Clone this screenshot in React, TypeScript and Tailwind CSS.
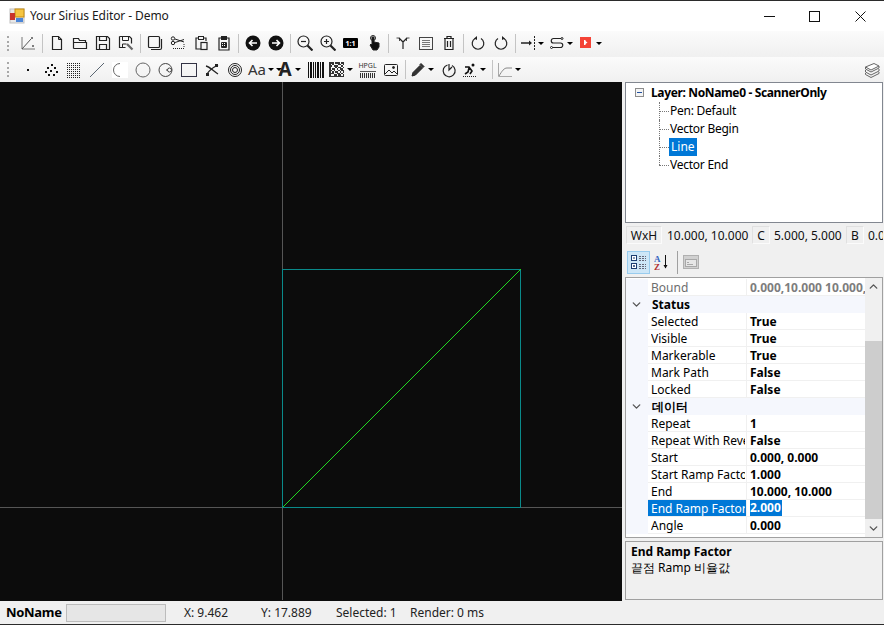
import type { ReactNode } from "react";
import { ChevronDown, ChevronUp } from "lucide-react";

const Ico = ({ children, size = 16 }: { children: ReactNode; size?: number }) => (
  <svg width={size} height={size} viewBox="0 0 16 16" fill="none" stroke="#222" strokeWidth="1" className="shrink-0">
    {children}
  </svg>
);

const Btn = ({ children }: { children: ReactNode }) => (
  <div className="flex h-full w-[23px] shrink-0 items-center justify-center">{children}</div>
);

const Caret = () => (
  <div className="h-0 w-0 shrink-0 border-x-[3px] border-t-[3px] border-x-transparent border-t-black" />
);

const CaretBtn = ({ children }: { children: ReactNode }) => (
  <div className="flex h-full w-[29px] shrink-0 items-center gap-[2px] pl-[2px]">
    {children}
    <Caret />
  </div>
);

const Sep = () => (
  <div className="flex h-full w-[6px] shrink-0 items-center justify-center">
    <div className="h-[19px] w-px bg-[#c4c4c4]" />
  </div>
);

const Grip = () => (
  <div className="flex h-full w-[16px] shrink-0 items-center justify-center pr-[1px]">
    <div className="h-[15px] w-[2px] border-l-2 border-dotted border-[#a8a8a8]" />
  </div>
);

const SCATTER = [[8, 2], [4, 5], [11, 5], [7, 8], [2, 9], [13, 9], [5, 12], [10, 12]];

// rough data matrix look, 1 = dark cell
const MATRIX = [
  "1110111011",
  "1010001101",
  "1101110010",
  "1000101101",
  "1011010110",
  "1101001011",
  "1010110101",
  "1110011010",
  "1001101101",
  "1111111111",
];

const Toolbar1 = () => (
  <div className="flex h-[26px] bg-gradient-to-b from-[#fbfbfb] to-[#f0f0f0] pb-[2px]">
    <Grip />
    <Btn>
      <Ico>
        <path d="M2 2v12h13" stroke="#777" />
        <path d="M2 14 11 4" stroke="#555" />
        <path d="M11 3h2M12 2v2M12 11h2M13 10v2" stroke="#555" />
      </Ico>
    </Btn>
    <Sep />
    <Btn>
      <Ico>
        <path d="M3.500 1.500h6l3 3v10h-9z" strokeWidth="1.200" />
        <path d="M9.500 1.500v3h3" />
      </Ico>
    </Btn>
    <Btn>
      <Ico>
        <path d="M1.500 13.500v-10h5l1 2h6v2M1.500 13.500h13v-6h-13" strokeWidth="1.200" />
      </Ico>
    </Btn>
    <Btn>
      <Ico>
        <path d="M1.500 1.500h11l2 2v11h-13z" strokeWidth="1.200" />
        <path d="M4.500 1.500v4h7v-4M4.500 14.500v-5h7v5" strokeWidth="1.200" />
      </Ico>
    </Btn>
    <Btn>
      <Ico>
        <path d="M1.500 1.500h10l2 2v5M1.500 1.500v11h6" strokeWidth="1.200" />
        <path d="M4.500 1.500v4h6v-4M4.500 12v-3h4" />
        <path d="m9 9 5.500 5.500" stroke="#666" strokeWidth="2.200" />
      </Ico>
    </Btn>
    <Sep />
    <Btn>
      <Ico>
        <rect x="1.500" y="1.500" width="11" height="11" rx="1" strokeWidth="1.200" />
        <path d="M14.500 4v9a1.500 1.500 0 0 1-1.500 1.500H4" strokeWidth="1.200" />
      </Ico>
    </Btn>
    <Btn>
      <Ico>
        <circle cx="3" cy="3.500" r="1.700" />
        <circle cx="3" cy="8" r="1.700" />
        <path d="m5 4 9 3M5 7.500l9-3" />
        <path d="M3 13.500h11M14 9v4" strokeDasharray="1 1" />
      </Ico>
    </Btn>
    <Btn>
      <Ico>
        <path d="M5 3H3v11h5M11 3h2v3" strokeWidth="1.200" />
        <rect x="5.500" y="1.500" width="5" height="3" />
        <rect x="8" y="7.500" width="6" height="7" strokeWidth="1.200" />
      </Ico>
    </Btn>
    <Btn>
      <Ico>
        <path d="M5 3H3v12h10V3h-2" strokeWidth="1.200" />
        <rect x="5.500" y="1.500" width="5" height="3" fill="#222" />
        <path d="M5.500 7.500h5v5h-5zM5.500 9.500h5M5.500 11.500h5M7.500 7.500v5M9.500 7.500v5" />
      </Ico>
    </Btn>
    <Sep />
    <Btn>
      <svg width="16" height="16" viewBox="0 0 16 16">
        <circle cx="8" cy="8" r="7.500" fill="#111" />
        <path d="M12 8H5M7.500 5 4.500 8l3 3" fill="none" stroke="#fff" strokeWidth="1.600" />
      </svg>
    </Btn>
    <Btn>
      <svg width="16" height="16" viewBox="0 0 16 16">
        <circle cx="8" cy="8" r="7.500" fill="#111" />
        <path d="M4 8h7M8.500 5l3 3-3 3" fill="none" stroke="#fff" strokeWidth="1.600" />
      </svg>
    </Btn>
    <Sep />
    <Btn>
      <Ico>
        <circle cx="6.500" cy="6.500" r="5.500" strokeWidth="1.200" />
        <path d="M4 6.500h5" strokeWidth="1.200" />
        <path d="m10.500 10.500 5 5" strokeWidth="2.200" />
      </Ico>
    </Btn>
    <Btn>
      <Ico>
        <circle cx="6.500" cy="6.500" r="5.500" strokeWidth="1.200" />
        <path d="M4 6.500h5M6.500 4v5" strokeWidth="1.200" />
        <path d="m10.500 10.500 5 5" strokeWidth="2.200" />
      </Ico>
    </Btn>
    <Btn>
      <div className="flex h-[10px] w-[15px] items-center justify-center rounded-[1px] bg-black [font-family:'Liberation_Sans',sans-serif] text-[7px] font-bold leading-none text-white">
        1:1
      </div>
    </Btn>
    <Btn>
      <Ico>
        <path d="M6 2h2v5l5 1v4l-2 3H7L4 10l1-1 1 1z" fill="#111" />
        <circle cx="7" cy="3" r="2.500" />
      </Ico>
    </Btn>
    <Sep />
    <Btn>
      <Ico>
        <path d="M8 14V7M8 7 4 3M8 7l4-4" strokeWidth="1.200" />
        <path d="M1.500 3h3v3M14.500 3h-3v3" strokeWidth="0.800" />
      </Ico>
    </Btn>
    <Btn>
      <Ico>
        <rect x="1.500" y="2.500" width="13" height="12" stroke="#444" />
        <path d="M4 5.500h8M4 7.500h8M4 9.500h8M4 11.500h8" stroke="#777" />
      </Ico>
    </Btn>
    <Btn>
      <Ico>
        <path d="M3 3.500h10M6 3.500v-2h4v2M4 3.500v11h8v-11M6.500 6v6M9.500 6v6" strokeWidth="1.200" />
      </Ico>
    </Btn>
    <Sep />
    <Btn>
      <Ico>
        <path d="M5 3.500a5.800 5.800 0 1 0 6 0" strokeWidth="1.200" />
        <path d="M7 1v4L4 3.500z" fill="#222" stroke="none" />
      </Ico>
    </Btn>
    <Btn>
      <Ico>
        <path d="M11 3.500a5.800 5.800 0 1 1-6 0" strokeWidth="1.200" />
        <path d="M9 1v4l3-1.500z" fill="#222" stroke="none" />
      </Ico>
    </Btn>
    <Sep />
    <CaretBtn>
      <Ico>
        <path d="M1 8h10" strokeWidth="1.500" />
        <path d="m9 5.500 3 2.500-3 2.500z" fill="#222" stroke="none" />
        <path d="M14.500 1v14" strokeDasharray="2 1" />
      </Ico>
    </CaretBtn>
    <CaretBtn>
      <Ico>
        <path d="M14 3.500H4.500a2.200 2.200 0 0 0 0 4.500h7a2.200 2.200 0 0 1 0 4.500H2" strokeWidth="1.200" />
        <circle cx="13" cy="3.500" r="1" fill="#fff" />
        <circle cx="2.500" cy="12.500" r="1" fill="#fff" />
      </Ico>
    </CaretBtn>
    <CaretBtn>
      <svg width="16" height="16" viewBox="0 0 16 16">
        <rect x="2" y="2" width="11" height="11" fill="#f44336" />
        <path d="M6 5v5l3.500-2.500z" fill="#fff" />
        <path d="M6 5h1.500v5H6z" fill="#fff" />
      </svg>
    </CaretBtn>
  </div>
);

const Toolbar2 = () => (
  <div className="flex h-[25px] items-stretch bg-gradient-to-b from-[#fbfbfb] to-[#f0f0f0]">
    <Grip />
    <Btn>
      <Ico>
        <rect x="7" y="7" width="2" height="2" fill="#111" stroke="none" />
      </Ico>
    </Btn>
    <Btn>
      <Ico>
        {SCATTER.map(([x, y]) => (
          <rect key={`${x}-${y}`} x={x} y={y} width="2" height="2" fill="#111" stroke="none" />
        ))}
      </Ico>
    </Btn>
    <Btn>
      <Ico>
        <path
          d="M1 1.500h14M1 3.500h14M1 5.500h14M1 7.500h14M1 9.500h14M1 11.500h14M1 13.500h14M1 15.500h14"
          stroke="#222"
          strokeDasharray="1 1"
        />
      </Ico>
    </Btn>
    <Btn>
      <Ico>
        <path d="M1 15 15 1" stroke="#5a6672" />
      </Ico>
    </Btn>
    <Btn>
      <div className="flex h-4 w-4 items-center justify-center bg-white">
        <Ico>
          <path d="M8 1.500a6.500 6.500 0 0 0 0 13" stroke="#666" />
        </Ico>
      </div>
    </Btn>
    <Btn>
      <Ico>
        <circle cx="8" cy="8" r="7" stroke="#666" />
      </Ico>
    </Btn>
    <Btn>
      <Ico>
        <circle cx="7.500" cy="8" r="6.500" stroke="#444" />
        <path d="M8 8h6" stroke="#444" />
        <circle cx="11.500" cy="8" r="2" fill="#fff" stroke="#444" />
      </Ico>
    </Btn>
    <Btn>
      <Ico>
        <rect x="0.500" y="1.500" width="15" height="13" stroke="#334" />
      </Ico>
    </Btn>
    <Btn>
      <Ico>
        <path d="M2 4c4 1 7 5 12 8" strokeWidth="1.300" />
        <path d="M14 3c-4 2-8 4-11 9" strokeWidth="1.300" />
        <rect x="11" y="2" width="3" height="3" fill="#222" stroke="none" />
        <rect x="2" y="11" width="3" height="3" fill="#222" stroke="none" />
      </Ico>
    </Btn>
    <Btn>
      <Ico>
        <circle cx="8" cy="8" r="6.500" />
        <circle cx="8" cy="8" r="4.500" />
        <circle cx="8" cy="8" r="2.500" />
      </Ico>
    </Btn>
    <CaretBtn>
      <span className="w-[16px] shrink-0 [font-family:'Liberation_Sans',sans-serif] text-[15px] leading-none text-[#333]">Aa</span>
      <span className="ml-[2px]">
        <Caret />
      </span>
    </CaretBtn>
    <CaretBtn>
      <span className="w-[16px] shrink-0 text-center [font-family:'Liberation_Sans',sans-serif] text-[19px] font-bold leading-none text-[#222]">A</span>
    </CaretBtn>
    <Btn>
      <svg width="16" height="16" viewBox="0 0 16 16" className="shrink-0">
        <path d="M0 0h1v16H0zM2 0h2v16H2zM5 0h1v16H5zM7 0h1v16H7zM9 0h2v16H9zM12 0h1v16h-1zM14 0h2v16h-2z" fill="#111" />
      </svg>
    </Btn>
    <CaretBtn>
      <svg width="15" height="15" viewBox="0 0 15 15" className="mr-px shrink-0" shapeRendering="crispEdges">
        {MATRIX.flatMap((row, y) =>
          row.split("").map((c, x) =>
            c === "1" ? <rect key={`${x}-${y}`} x={x * 1.500} y={y * 1.500} width="1.500" height="1.500" fill="#333" /> : null,
          ),
        )}
      </svg>
    </CaretBtn>
    <Btn>
      <div className="flex h-4 w-4 flex-col items-center justify-between">
        <span className="[font-family:'Liberation_Sans',sans-serif] text-[7px] leading-[8px] text-[#333]">HPGL</span>
        <div className="h-[1px] w-full bg-[#555]" />
        <div className="h-[5px] w-full bg-[repeating-linear-gradient(90deg,#333_0,#333_1px,transparent_1px,transparent_2px)]" />
      </div>
    </Btn>
    <Btn>
      <Ico>
        <rect x="1.500" y="2.500" width="13" height="11" rx="1" />
        <path d="m2 12 4-4 3 3 2-2 3 3" />
        <circle cx="10.500" cy="5.500" r="1" fill="#222" />
      </Ico>
    </Btn>
    <Sep />
    <CaretBtn>
      <Ico>
        <path d="m2 14 1-3.500 7-7 2.500 2.500-7 7z" fill="#333" />
        <path d="m10 2.500 1-1 3 3-1 1z" fill="#333" />
      </Ico>
    </CaretBtn>
    <Btn>
      <Ico>
        <path d="M6.500 3a6 6 0 1 0 4.500 .5" strokeWidth="1.200" />
        <path d="M8 2v6l3-3" strokeWidth="1.200" />
      </Ico>
    </Btn>
    <CaretBtn>
      <Ico>
        <circle cx="11" cy="3" r="1.500" fill="#111" stroke="none" />
        <path d="m3 5 4 0 3 4-2 3M7 6l-1 4-3 2" strokeWidth="1.600" stroke="#111" />
        <path d="M1 14.500h14" strokeDasharray="1 1" />
      </Ico>
    </CaretBtn>
    <Sep />
    <CaretBtn>
      <Ico>
        <path d="M1.500 1v13.500H15" stroke="#aaa" />
        <path d="M2 14c3-5 5-8 8-8h5" stroke="#888" />
      </Ico>
    </CaretBtn>
    <div className="flex-1" />
    <div className="mr-[4px] flex items-center">
      <Ico>
        <path d="M1.500 5 10 1.500 15 4l-8 4z" fill="#fff" stroke="#666" />
        <path d="M1.500 5v2l5.500 3 8-4V4M1.500 8v2L7 13l8-4V7M1.500 11v1.500L7 15.500l8-4V10" stroke="#666" />
      </Ico>
    </div>
  </div>
);

const Canvas = () => (
  <div className="h-full w-[622px] shrink-0 bg-[#0c0c0c]">
    <svg width="622" height="518" viewBox="0 0 622 518" fill="none" className="block" shapeRendering="crispEdges">
      <path d="M282.500 0v518M0 425.500h622" stroke="#565656" />
      <rect x="282.500" y="187.500" width="238" height="238" stroke="#0a8a8a" />
      <path d="m282.500 425.500 238-238" stroke="#20d820" />
    </svg>
  </div>
);

const TreeChild = ({ label, selected, last }: { label: string; selected?: boolean; last?: boolean }) => (
  <div className="relative flex h-[18px] items-center pl-[43px]">
    <div className={`absolute left-[33px] top-0 w-px border-l border-dotted border-[#777] ${last ? "h-[9px]" : "h-[18px]"}`} />
    <div className="absolute left-[33px] top-[9px] w-[10px] border-t border-dotted border-[#777]" />
    <span className={selected ? "bg-[#0078d7] px-[2px] leading-[18px] text-white" : "px-[1px] leading-[18px] tracking-[-0.25px]"}>{label}</span>
  </div>
);

const Tree = () => (
  <div className="h-[141px] w-full border border-[#828790] bg-white pt-[1px] [font-family:'Liberation_Sans',sans-serif] text-[12px] text-black">
    <div className="relative flex h-[18px] items-center pl-[25px]">
      <div className="absolute left-[9px] top-[4px] flex h-[9px] w-[9px] items-center justify-center border border-[#8c8c8c] bg-[#f4f4f4]">
        <div className="h-px w-[5px] bg-[#2050a0]" />
      </div>
      <span className="font-bold tracking-[-0.36px]">Layer: NoName0 - ScannerOnly</span>
    </div>
    <TreeChild label="Pen: Default" />
    <TreeChild label="Vector Begin" />
    <TreeChild label="Line" selected />
    <TreeChild label="Vector End" last />
  </div>
);

const Cell = ({ children, w }: { children: ReactNode; w: string }) => (
  <div className={`flex h-[18px] ${w} shrink-0 items-center justify-center border border-[#fbfbfb] border-l-[#e0e0e0] border-t-[#e0e0e0] bg-[#f0f0f0] pt-[2px]`}>
    {children}
  </div>
);

const SizeStrip = () => (
  <div className="flex h-[24px] items-center overflow-hidden whitespace-nowrap pl-px [font-family:'Liberation_Sans',sans-serif] text-[12px] text-[#111]">
    <Cell w="w-[36px]">WxH</Cell>
    <span className="w-[90px] shrink-0 pl-[5px] pt-[2px]">10.000, 10.000</span>
    <Cell w="w-[18px]">C</Cell>
    <span className="w-[76px] shrink-0 pl-[4px] pt-[2px]">5.000, 5.000</span>
    <Cell w="w-[18px]">B</Cell>
    <span className="w-[20px] shrink-0 overflow-hidden pl-[4px] pt-[2px]">0.0</span>
  </div>
);

const GridTools = () => (
  <div className="flex h-[30px] items-center pl-[2px]">
    <div className="flex h-[23px] w-[23px] items-center justify-center border border-[#99ccee] bg-[#cde6f7]">
      <Ico>
        <rect x="0.500" y="1.500" width="5" height="5" fill="#fff" stroke="#1c3c70" />
        <rect x="0.500" y="9.500" width="5" height="5" fill="#fff" stroke="#1c3c70" />
        <path d="M2 4h2M2 12h2M3 11v2" stroke="#1c3c70" />
        <path d="M8 2.500h7M8 4.500h7M8 6.500h7M8 10.500h7M8 12.500h7M8 14.500h7" stroke="#667" strokeDasharray="2 1" />
      </Ico>
    </div>
    <div className="flex w-[24px] items-center justify-center">
      <Ico>
        <text x="0" y="7.500" fontSize="9" fontWeight="700" fill="#3465c0" stroke="none" fontFamily="Liberation Serif, serif">A</text>
        <text x="0" y="15.500" fontSize="9" fontWeight="700" fill="#b03030" stroke="none" fontFamily="Liberation Serif, serif">Z</text>
        <path d="M11.500 1v13" stroke="#111" />
        <path d="m9.500 11 2 3.500 2-3.500z" fill="#111" stroke="none" />
      </Ico>
    </div>
    <div className="mx-[3px] h-[23px] w-px bg-[#a0a0a0]" />
    <div className="ml-[2px] flex items-center justify-center">
      <Ico>
        <rect x="0.500" y="1.500" width="15" height="13" fill="#d0d0d0" stroke="#b0b0b0" />
        <rect x="2.500" y="5.500" width="11" height="7" fill="#e6e6e6" stroke="#a8a8a8" />
        <path d="M4 8.500h2M4 10.500h6" stroke="#a8a8a8" />
      </Ico>
    </div>
  </div>
);

const Cat = ({ label }: { label: string }) => (
  <div className="flex h-[17px] items-center bg-[#f5f7fd]">
    <div className="flex w-[22px] shrink-0 items-center justify-center pr-[2px]">
      <ChevronDown size={13} strokeWidth={2.500} className="text-[#555]" />
    </div>
    <span className="pl-[4px] font-bold">{label}</span>
  </div>
);

const Prop = ({
  label,
  value,
  selected,
  dim,
}: {
  label: string;
  value: string;
  selected?: boolean;
  dim?: boolean;
}) => (
  <div className="flex h-[17px]">
    <div className="w-[22px] shrink-0 bg-[#f5f7fd]" />
    <div
      className={`flex w-[99px] shrink-0 items-center overflow-hidden whitespace-nowrap border-b border-r border-[#f0f0f0] pl-[3px] ${
        selected ? "border-[#0078d7] bg-[#0078d7] text-white" : dim ? "text-[#6d6d6d]" : ""
      }`}
    >
      <span className="inline-block h-[16px] w-[94px] overflow-hidden pt-[1px] leading-[16px]">{label}</span>
    </div>
    <div className={`flex min-w-0 flex-1 items-center overflow-hidden whitespace-nowrap border-b border-[#f0f0f0] pl-[3px] font-bold ${dim ? "text-[#7d7d7d]" : ""}`}>
      <span className={selected ? "bg-[#0078d7] pr-[1px] leading-[16px] text-white" : "pt-[1px] leading-[16px]"}>{value}</span>
    </div>
  </div>
);

const PropertyGrid = () => (
  <div className="flex h-[261px] border border-[#a0a0a0] bg-white [font-family:'Liberation_Sans','Noto_Sans_CJK_KR',sans-serif] text-[12px] text-black">
    <div className="min-w-0 flex-1 pt-[1px]">
      <Prop label="Bound" value="0.000,10.000 10.000, 0.000" dim />
      <Cat label="Status" />
      <Prop label="Selected" value="True" />
      <Prop label="Visible" value="True" />
      <Prop label="Markerable" value="True" />
      <Prop label="Mark Path" value="False" />
      <Prop label="Locked" value="False" />
      <Cat label="데이터" />
      <Prop label="Repeat" value="1" />
      <Prop label="Repeat With Reverse" value="False" />
      <Prop label="Start" value="0.000, 0.000" />
      <Prop label="Start Ramp Factor" value="1.000" />
      <Prop label="End" value="10.000, 10.000" />
      <Prop label="End Ramp Factor" value="2.000" selected />
      <Prop label="Angle" value="0.000" />
    </div>
    <div className="flex w-[17px] shrink-0 flex-col bg-[#f0f0f0]">
      <div className="flex h-[17px] items-center justify-center">
        <ChevronUp size={13} strokeWidth={2.500} className="text-[#555]" />
      </div>
      <div className="mt-[46px] h-[178px] bg-[#cdcdcd]" />
      <div className="flex flex-1 items-center justify-center">
        <ChevronDown size={13} strokeWidth={2.500} className="text-[#555]" />
      </div>
    </div>
  </div>
);

const Description = () => (
  <div className="mt-[3px] h-[59px] border border-[#a0a0a0] bg-[#f0f0f0] pl-[5px] pt-[2px] [font-family:'Liberation_Sans','Noto_Sans_CJK_KR',sans-serif] text-[12px] leading-[16px] text-black">
    <div className="font-bold">End Ramp Factor</div>
    <div>끝점 Ramp 비율값</div>
  </div>
);

const StatusBar = () => (
  <div className="flex h-[23px] items-center bg-[#f0f0f0] [font-family:'Liberation_Sans',sans-serif] text-[12px] text-[#222]">
    <span className="w-[66px] shrink-0 pl-[6px] pt-[1px] text-[13px] font-bold tracking-[-0.3px] text-black">NoName</span>
    <div className="h-[18px] w-[100px] shrink-0 border border-[#bcbcbc] bg-[#e6e6e6]" />
    <span className="w-[95px] shrink-0 pl-[18px] pt-[1px]">X: 9.462</span>
    <span className="w-[75px] shrink-0 pt-[1px]">Y: 17.889</span>
    <span className="w-[74px] shrink-0 pt-[1px]">Selected: 1</span>
    <span className="shrink-0 pt-[1px]">Render: 0 ms</span>
  </div>
);

export default function App() {
  return (
    <div className="flex h-[625px] w-[884px] flex-col overflow-hidden border-y border-[#2b2b2b] bg-[#f0f0f0]">
      <div className="flex h-[30px] shrink-0 items-center bg-white pr-px">
        <svg width="16" height="16" viewBox="0 0 16 16" className="ml-[9px] shrink-0">
          <rect x="1" y="1" width="14" height="14" fill="#e8e8e8" stroke="#c0c0c0" />
          <rect x="6" y="1" width="9" height="8" fill="#f5c542" stroke="#c48a10" />
          <rect x="1" y="5" width="5" height="7" fill="#c8342c" />
          <rect x="7" y="10" width="7" height="4" fill="#4c86d8" />
        </svg>
        <span className="ml-[5px] [font-family:'Liberation_Sans',sans-serif] text-[12px] tracking-[-0.08px] text-[#1a1a1a]">Your Sirius Editor - Demo</span>
        <div className="flex-1" />
        <div className="flex w-[46px] justify-center">
          <svg width="11" height="11" viewBox="0 0 11 11" stroke="#111" fill="none">
            <path d="M0 5.500h11" />
          </svg>
        </div>
        <div className="flex w-[45px] justify-center">
          <svg width="11" height="11" viewBox="0 0 11 11" stroke="#111" fill="none">
            <rect x="0.500" y="0.500" width="10" height="10" />
          </svg>
        </div>
        <div className="flex w-[46px] justify-center">
          <svg width="11" height="11" viewBox="0 0 11 11" stroke="#111" fill="none">
            <path d="m0.500 0.500 10 10M10.500 0.500l-10 10" />
          </svg>
        </div>
      </div>
      <Toolbar1 />
      <Toolbar2 />
      <div className="flex min-h-0 flex-1">
        <div className="flex w-[625px] shrink-0 flex-col">
          <div className="min-h-0 flex-1">
            <Canvas />
          </div>
          <StatusBar />
        </div>
        <div className="flex min-w-0 flex-1 flex-col pr-px">
          <Tree />
          <SizeStrip />
          <GridTools />
          <PropertyGrid />
          <Description />
        </div>
      </div>
    </div>
  );
}
